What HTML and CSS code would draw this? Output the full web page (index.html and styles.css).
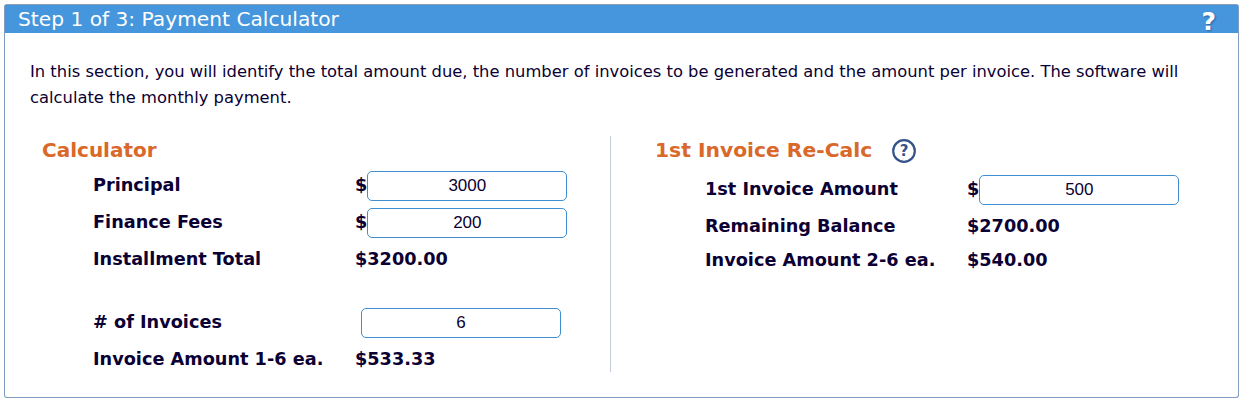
FILE: index.html
```html
<!DOCTYPE html>
<html lang="en">
<head>
    <meta charset="UTF-8">
    <title>Payment Calculator</title>
    <link rel="stylesheet" href="styles.css">
</head>
<body>
    <div class="panel">
        <div class="panel-head">
            <span class="panel-title">Step 1 of 3: Payment Calculator</span>
            <span class="help-big">?</span>
        </div>
        <p class="intro">In this section, you will identify the total amount due, the number of invoices to be generated and the amount per invoice. The software will calculate the monthly payment.</p>
        <div class="columns">
            <div class="col col-left">
                <h2 class="calc-title">Calculator</h2>
                <div class="row">
                    <span class="label">Principal</span>
                    <span class="value">$</span><input class="amount" type="text" value="3000">
                </div>
                <div class="row">
                    <span class="label">Finance Fees</span>
                    <span class="value">$</span><input class="amount" type="text" value="200">
                </div>
                <div class="row">
                    <span class="label">Installment Total</span>
                    <span class="value">$3200.00</span>
                </div>
                <div class="row row-gap">
                    <span class="label"># of Invoices</span>
                    <input class="amount amount-solo" type="text" value="6">
                </div>
                <div class="row">
                    <span class="label">Invoice Amount 1-6 ea.</span>
                    <span class="value">$533.33</span>
                </div>
            </div>
            <div class="col col-right">
                <h2 class="recalc-title">1st Invoice Re-Calc
                    <svg class="help-small" viewBox="0 0 26 26" width="26" height="26">
                        <circle cx="13" cy="13" r="10.8" fill="#fff" stroke="#34548a" stroke-width="2.2"/>
                        <text x="13" y="18" text-anchor="middle" class="help-mark">?</text>
                    </svg>
                </h2>
                <div class="row row-first">
                    <span class="label">1st Invoice Amount</span>
                    <span class="value">$</span><input class="amount" type="text" value="500">
                </div>
                <div class="row">
                    <span class="label">Remaining Balance</span>
                    <span class="value">$2700.00</span>
                </div>
                <div class="row row-short">
                    <span class="label">Invoice Amount 2-6 ea.</span>
                    <span class="value">$540.00</span>
                </div>
            </div>
        </div>
    </div>
</body>
</html>
```

FILE: styles.css
```css
body {
    margin: 0;
    padding: 4px 4px 0;
    background: #fff;
    font-family: "DejaVu Sans", Verdana, sans-serif;
    color: #0b0033;
}
.panel {
    width: 1235px;
    height: 394px;
    box-sizing: border-box;
    border: 1px solid #7f9cc0;
    border-top-color: #8f9fb3;
    border-radius: 3px;
}
.panel-head {
    height: 28px;
    background: #4596dd;
    color: #fff;
    display: flex;
    justify-content: space-between;
    align-items: center;
    padding: 0 22px 0 13px;
}
.panel-title {
    font-size: 20.2px;
}
.help-big {
    font-size: 25px;
    line-height: 28px;
    font-weight: bold;
    margin-top: 6px;
    text-shadow: 1px 1px 2px #2c5f9e;
}
.intro {
    margin: 26px 25px 0;
    font-size: 16.35px;
    line-height: 26px;
}
.columns {
    display: flex;
    margin-top: 25px;
}
.col {
    height: 236px;
    box-sizing: border-box;
}
.col-left {
    width: 606px;
    padding-left: 37px;
    border-right: 1px solid #c3ccd6;
}
.col-right {
    padding-left: 43px;
}
h2 {
    margin: 0 0 2px;
    font-size: 20.3px;
    line-height: 28px;
    color: #d9682a;
}
.calc-title {
    font-size: 20px;
}
.recalc-title {
    display: flex;
    align-items: center;
    gap: 19px;
    margin-left: 1px;
}
.help-small {
    margin-top: 2px;
}
.help-mark {
    font-size: 15px;
    fill: #34548a;
}
.row {
    display: flex;
    align-items: center;
    height: 37px;
    padding-left: 51px;
    font-size: 17.7px;
    font-weight: bold;
}
.row-gap {
    margin-top: 26px;
}
.row-first {
    margin-top: 6px;
}
.row-short {
    height: 34px;
    margin-top: -1px;
}
.label {
    width: 262px;
    white-space: nowrap;
}
.amount {
    width: 200px;
    height: 30px;
    margin-top: 2px;
    box-sizing: border-box;
    border: 1px solid #3e8ed0;
    border-radius: 5px;
    text-align: center;
    font-family: "Liberation Sans", Arial, sans-serif;
    font-size: 17px;
    color: #0b0033;
    padding: 0;
}
.amount-solo {
    margin-left: 6px;
}
```
